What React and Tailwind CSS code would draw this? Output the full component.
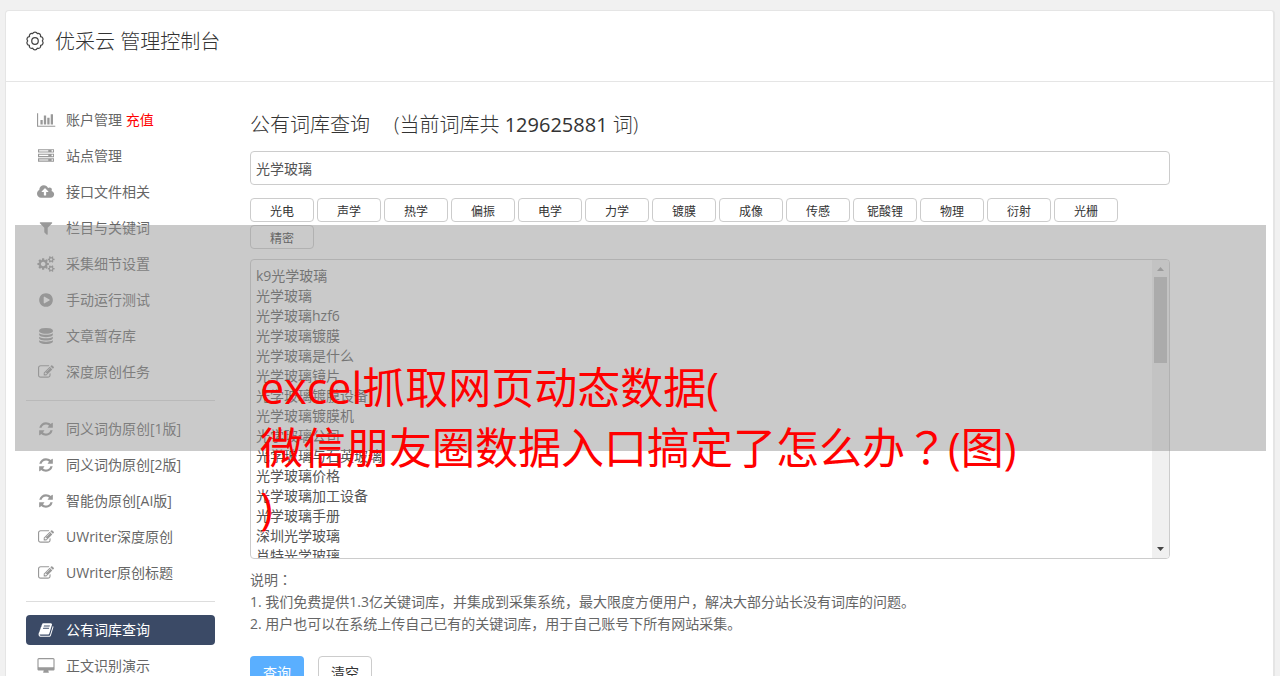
import React from "react";

const ICONS = {
  chart: [2048, "M640 896v512h-256v-512h256zm384-512v1024h-256v-1024h256zm1024 1152v128h-2048v-1536h128v1408h1920zm-640-896v768h-256v-768h256zm384-384v1152h-256v-1152h256z"],
  server: [1792, "M128 1408h1024v-128h-1024v128zm0-512h1024v-128h-1024v128zm1568 448q0-40-28-68t-68-28-68 28-28 68 28 68 68 28 68-28 28-68zm-1568-960h1024v-128h-1024v128zm1568 448q0-40-28-68t-68-28-68 28-28 68 28 68 68 28 68-28 28-68zm0-512q0-40-28-68t-68-28-68 28-28 68 28 68 68 28 68-28 28-68zm96 832v384h-1792v-384h1792zm0-512v384h-1792v-384h1792zm0-512v384h-1792v-384h1792z"],
  cloud: [1920, "M1280 864q0-14-9-23l-352-352q-9-9-23-9t-23 9l-351 351q-10 12-10 24 0 14 9 23t23 9h224v352q0 13 9.5 22.5t22.5 9.5h192q13 0 22.5-9.5t9.5-22.5v-352h224q13 0 22.5-9.5t9.5-22.5zm640 288q0 159-112.5 271.5t-271.5 112.5h-1088q-185 0-316.5-131.5t-131.5-316.5q0-130 70-240t188-165q-2-30-2-43 0-212 150-362t362-150q156 0 285.5 87t188.5 231q71-62 166-62 106 0 181 75t75 181q0 76-41 138 130 31 213.5 135.5t83.5 238.5z"],
  filter: [1792, "M1595 295q17 41-14 70l-493 493v742q0 42-39 59-13 5-25 5-27 0-45-19l-256-256q-19-19-19-45v-486l-493-493q-31-29-14-70 17-39 59-39h1280q42 0 59 39z"],
  cogs: [1856, "M832 896q0-106-75-181t-181-75-181 75-75 181 75 181 181 75 181-75 75-181zm768 512q0-52-38-90t-90-38-90 38-38 90q0 53 37.5 90.5t90.5 37.5 90.5-37.5 37.5-90.5zm0-1024q0-52-38-90t-90-38-90 38-38 90q0 53 37.5 90.5t90.5 37.5 90.5-37.5 37.5-90.5zm-384 421v185q0 10-7 19.5t-16 10.5l-155 24q-11 35-32 76 34 48 90 115 7 11 7 20 0 12-7 19-23 30-82.5 89.5t-78.5 59.5q-11 0-21-7l-115-90q-37 19-77 31-11 108-23 155-7 24-30 24h-186q-11 0-20-7.5t-10-17.5l-23-153q-34-10-75-31l-118 89q-7 7-20 7-11 0-21-8-144-133-144-160 0-9 7-19 10-14 41-53t47-61q-23-44-35-82l-152-24q-10-1-17-9.5t-7-19.5v-185q0-10 7-19.5t16-10.5l155-24q11-35 32-76-34-48-90-115-7-11-7-20 0-12 7-20 22-30 82-89t79-59q11 0 21 7l115 90q34-18 77-32 11-108 23-154 7-24 30-24h186q11 0 20 7.5t10 17.5l23 153q34 10 75 31l118-89q8-7 20-7 11 0 21 8 144 133 144 160 0 8-7 19-12 16-42 54t-45 60q23 48 34 82l152 23q10 2 17 10.5t7 19.5zm640 533v140q0 16-149 31-12 27-30 52 51 113 51 138 0 4-4 7-122 71-124 71-8 0-46-47t-52-68q-20 2-30 2t-30-2q-14 21-52 68t-46 47q-2 0-124-71-4-3-4-7 0-25 51-138-18-25-30-52-149-15-149-31v-140q0-16 149-31 13-29 30-52-51-113-51-138 0-4 4-7 4-2 35-20t59-34 30-16q8 0 46 46.5t52 67.5q20-2 30-2t30 2q51-71 92-112l6-2q4 0 124 70 4 3 4 7 0 25-51 138 17 23 30 52 149 15 149 31zm0-1024v140q0 16-149 31-12 27-30 52 51 113 51 138 0 4-4 7-122 71-124 71-8 0-46-47t-52-68q-20 2-30 2t-30-2q-14 21-52 68t-46 47q-2 0-124-71-4-3-4-7 0-25 51-138-18-25-30-52-149-15-149-31v-140q0-16 149-31 13-29 30-52-51-113-51-138 0-4 4-7 4-2 35-20t59-34 30-16q8 0 46 46.5t52 67.5q20-2 30-2t30 2q51-71 92-112l6-2q4 0 124 70 4 3 4 7 0 25-51 138 17 23 30 52 149 15 149 31z"],
  play: [1792, "M896 128q209 0 385.5 103t279.5 279.5 103 385.5-103 385.5-279.5 279.5-385.5 103-385.5-103-279.5-279.5-103-385.5 103-385.5 279.5-279.5 385.5-103zm384 823q32-18 32-55t-32-55l-544-320q-31-19-64-1-32 19-32 56v640q0 37 32 56 16 8 32 8 17 0 32-9z"],
  database: [1792, "M896 768q237 0 443-43t325-127v170q0 69-103 128t-280 93.5-385 34.5-385-34.5-280-93.5-103-128v-170q119 84 325 127t443 43zm0 768q237 0 443-43t325-127v170q0 69-103 128t-280 93.5-385 34.5-385-34.5-280-93.5-103-128v-170q119 84 325 127t443 43zm0-384q237 0 443-43t325-127v170q0 69-103 128t-280 93.5-385 34.5-385-34.5-280-93.5-103-128v-170q119 84 325 127t443 43zm0-1152q208 0 385 34.5t280 93.5 103 128v128q0 69-103 128t-280 93.5-385 34.5-385-34.5-280-93.5-103-128v-128q0-69 103-128t280-93.5 385-34.5z"],
  edit: [1792, "M888 1184l116-116-152-152-116 116v56h96v96h56zm440-720q-16-16-33 1l-350 350q-17 17-1 33t33-1l350-350q17-17 1-33zm80 594v190q0 119-84.5 203.5t-203.5 84.5h-832q-119 0-203.5-84.5t-84.5-203.5v-832q0-119 84.5-203.5t203.5-84.5h832q63 0 117 25 15 7 18 23 3 17-9 29l-49 49q-14 14-32 8-23-6-45-6h-832q-66 0-113 47t-47 113v832q0 66 47 113t113 47h832q66 0 113-47t47-113v-126q0-13 9-22l64-64q15-15 35-7t20 29zm-96-738l288 288-672 672h-288v-288zm444 132l-92 92-288-288 92-92q28-28 68-28t68 28l152 152q28 28 28 68t-28 68z"],
  refresh: [1792, "M1639 1056q0 5-1 7-64 268-268 434.5t-478 166.5q-146 0-282.5-55t-243.5-157l-129 129q-19 19-45 19t-45-19-19-45v-448q0-26 19-45t45-19h448q26 0 45 19t19 45-19 45l-137 137q71 66 161 102t187 36q134 0 250-65t186-179q11-17 53-117 8-23 30-23h192q13 0 22.5 9.5t9.5 22.5zm25-800v448q0 26-19 45t-45 19h-448q-26 0-45-19t-19-45 19-45l138-138q-148-137-349-137-134 0-250 65t-186 179q-11 17-53 117-8 23-30 23h-199q-13 0-22.5-9.5t-9.5-22.5v-7q65-268 270-434.5t480-166.5q146 0 284 55.5t245 156.5l130-129q19-19 45-19t45 19 19 45z"],
  book: [1792, "M1703 478q40 57 18 129l-275 906q-19 64-76.5 107.5t-122.5 43.5h-923q-77 0-148.5-53.5t-99.5-131.5q-24-67-2-127 0-4 3-27t4-37q1-8-3-21.5t-3-19.5q2-11 8-21t16.5-23.5 16.5-23.5q23-38 45-91.5t30-91.5q3-10 .5-30t-.5-28q3-11 17-28t17-23q21-36 42-92t25-90q1-9-2.5-32t.5-28q4-13 22-30.5t22-22.5q19-26 42.5-84.5t27.5-96.5q1-8-3-25.5t-2-26.5q2-8 9-18t18-23 17-21q8-12 16.5-30.5t15-35 16-36 19.5-32 26.5-23.5 36-11.5 47.5 5.5l-1 3q38-9 51-9h761q74 0 114 56t18 130l-274 906q-36 119-71.5 153.5t-128.5 34.5h-869q-27 0-38 15-11 16-1 43 24 70 144 70h923q29 0 56-15.5t35-41.5l300-987q7-22 5-57 38 15 59 43zm-1064 2q-4 13 2 22.5t20 9.5h608q13 0 25.5-9.5t16.5-22.5l21-64q4-13-2-22.5t-20-9.5h-608q-13 0-25.5 9.5t-16.5 22.5zm-83 256q-4 13 2 22.5t20 9.5h608q13 0 25.5-9.5t16.5-22.5l21-64q4-13-2-22.5t-20-9.5h-608q-13 0-25.5 9.5t-16.5 22.5z"],
  desktop: [1792, "M1728 992v-832q0-13-9.5-22.5t-22.5-9.5h-1600q-13 0-22.5 9.5t-9.5 22.5v832q0 13 9.5 22.5t22.5 9.5h1600q13 0 22.5-9.5t9.5-22.5zm128-832v1088q0 66-47 113t-113 47h-544q0 37 16 77.5t32 71 16 43.5q0 26-19 45t-45 19h-512q-26 0-45-19t-19-45q0-14 16-44t32-70 16-78h-544q-66 0-113-47t-47-113v-1088q0-66 47-113t113-47h1600q66 0 113 47t47 113z"],
};

function Icon({ name }) {
  const [width, path] = ICONS[name];
  return (
    <span className="flex w-5 shrink-0 justify-center">
      <svg className="h-4 w-auto shrink-0 overflow-visible" viewBox={`0 0 ${width} 1792`} fill="currentColor" aria-hidden="true">
        <path d={path} />
      </svg>
    </span>
  );
}

function GearIcon() {
  return (
    <svg className="mb-[2px] size-[18px] overflow-visible" viewBox="2 1.800 16 16" fill="none" stroke="#444" strokeWidth="1.100" strokeLinejoin="round" aria-hidden="true">
      <path d="M8 3.200Q8.500 2 10 2Q11.500 2 12 3.200Q13.300 2.700 14.300 3.600Q15.300 4.500 14.900 5.900Q16.400 6 17 7.300Q17.500 8.700 16.500 9.700Q17.600 10.800 17 12.200Q16.400 13.600 15 13.600Q15.300 15 14.300 15.900Q13.200 16.800 12 16.200Q11.500 17.600 10 17.600Q8.500 17.600 8 16.200Q6.800 16.800 5.700 15.900Q4.700 15 5 13.600Q3.600 13.600 3 12.200Q2.400 10.800 3.500 9.700Q2.500 8.700 3 7.300Q3.600 6 5.100 5.900Q4.700 4.500 5.700 3.600Q6.700 2.700 8 3.200Z" />
      <circle cx="10" cy="9.800" r="2.900" />
    </svg>
  );
}

const NAV_GROUPS = [
  [
    { icon: "chart", label: "账户管理", extra: "充值" },
    { icon: "server", label: "站点管理" },
    { icon: "cloud", label: "接口文件相关" },
    { icon: "filter", label: "栏目与关键词" },
    { icon: "cogs", label: "采集细节设置" },
    { icon: "play", label: "手动运行测试" },
    { icon: "database", label: "文章暂存库" },
    { icon: "edit", label: "深度原创任务" },
  ],
  [
    { icon: "refresh", label: "同义词伪原创[1版]" },
    { icon: "refresh", label: "同义词伪原创[2版]" },
    { icon: "refresh", label: "智能伪原创[AI版]" },
    { icon: "edit", label: "UWriter深度原创" },
    { icon: "edit", label: "UWriter原创标题" },
  ],
  [
    { icon: "book", label: "公有词库查询", active: true },
    { icon: "desktop", label: "正文识别演示" },
  ],
];

const TAGS = ["光电", "声学", "热学", "偏振", "电学", "力学", "镀膜", "成像", "传感", "铌酸锂", "物理", "衍射", "光栅", "精密"];

const WORDS = [
  "k9光学玻璃",
  "光学玻璃",
  "光学玻璃hzf6",
  "光学玻璃镀膜",
  "光学玻璃是什么",
  "光学玻璃镜片",
  "光学玻璃镀膜设备",
  "光学玻璃镀膜机",
  "光学玻璃公司",
  "光学玻璃与石英玻璃",
  "光学玻璃价格",
  "光学玻璃加工设备",
  "光学玻璃手册",
  "深圳光学玻璃",
  "肖特光学玻璃",
].join("\n");

function NavItem({ icon, label, extra, active }) {
  return (
    <a
      href="#"
      className={
        active
          ? "flex h-[30px] items-center gap-[10px] rounded bg-[#3b4a66] px-[10px] text-white"
          : "flex h-[30px] items-center gap-[10px] rounded px-[10px] text-[#999]"
      }
    >
      <Icon name={icon} />
      <span className={active ? "text-white" : "text-[#666]"}>
        {label}
        {extra && <span className="text-[#f00]"> {extra}</span>}
      </span>
    </a>
  );
}

function Sidebar() {
  return (
    <nav className="w-[189px] shrink-0 text-sm">
      {NAV_GROUPS.map((group, i) => (
        <div key={i} className={i ? "mt-[13px] border-t border-[#ddd] pt-[13px]" : ""}>
          <div className="flex flex-col gap-[6px]">
            {group.map((item) => (
              <NavItem key={item.label} {...item} />
            ))}
          </div>
        </div>
      ))}
    </nav>
  );
}

function ScrollTrack() {
  return (
    <div className="flex w-[17px] shrink-0 flex-col items-center bg-[#f0f0f0]" aria-hidden="true">
      <svg className="h-[17px] w-[17px]" viewBox="0 0 17 17" fill="#a0a0a0">
        <path d="M5 11h7l-3.500-4z" />
      </svg>
      <div className="h-[86px] w-[13px] bg-[#c1c1c1]" />
      <svg className="mt-auto h-[17px] w-[17px]" viewBox="0 0 17 17" fill="#444">
        <path d="M5 6h7l-3.500 4z" />
      </svg>
    </div>
  );
}

function CenteredMark({ children }) {
  return (
    <span className="font-['Noto_Sans_CJK_JP',sans-serif] leading-none" lang="ja">
      {children}
    </span>
  );
}

function Watermark() {
  return (
    <div className="pointer-events-none absolute top-[225px] right-[14px] left-[15px] h-[226px] bg-[#969696]/50 pt-[133px] pl-[245px]">
      <p className="text-[43px] leading-[60px] whitespace-nowrap text-[#f00]">
        excel抓取网页动态数据(
        <br />
        微信朋友圈数据入口搞定了怎么办<CenteredMark>？</CenteredMark>(图)
        <br />)
      </p>
    </div>
  );
}

export default function App() {
  return (
    <div className="relative min-h-screen overflow-hidden bg-[#f1f1f1] px-[5px] pt-[10px] font-['Open_Sans','Noto_Sans_CJK_SC',sans-serif] text-[#333]">
      <div className="min-h-screen rounded-t border border-r-2 border-b-0 border-[#e5e5e5] bg-white">
        <header className="flex h-[71px] items-center gap-[11px] border-b border-[#e5e5e5] px-5 pb-2 text-xl font-light">
          <GearIcon />
          <h1>优采云 管理控制台</h1>
        </header>
        <div className="flex gap-[35px] px-5 pt-[23px]">
          <Sidebar />
          <main className="mr-[83px] min-w-0 flex-1 pb-6 text-sm">
            <h2 className="flex h-[40px] items-center gap-6 text-xl font-light">
              <span>公有词库查询</span>
              <span>
                (当前词库共 <span className="font-normal">129625881</span> 词)
              </span>
            </h2>
            <input
              aria-label="关键词"
              defaultValue="光学玻璃"
              className="mt-[6px] block h-[34px] w-full rounded border border-[#ccc] px-[5px] text-[#555]"
            />
            <div className="mt-[13px] flex flex-wrap gap-[3px]">
              {TAGS.map((tag) => (
                <button key={tag} type="button" className="h-6 w-16 rounded border border-[#ccc] pt-[3px] text-xs">
                  {tag}
                </button>
              ))}
            </div>
            <div className="mt-[10px] flex h-[300px] overflow-hidden rounded border border-[#ccc]">
              <textarea
                aria-label="查询结果"
                defaultValue={WORDS}
                className="min-w-0 flex-1 resize-none px-[5px] py-[6px] leading-5 text-[#555] outline-none [scrollbar-width:none]"
              />
              <ScrollTrack />
            </div>
            <div className="mt-[10px] leading-[22px] text-[#666]">
              <p>
                说明<CenteredMark>：</CenteredMark>
              </p>
              <p>1. 我们免费提供1.3亿关键词库，并集成到采集系统，最大限度方便用户，解决大部分站长没有词库的问题。</p>
              <p>2. 用户也可以在系统上传自己已有的关键词库，用于自己账号下所有网站采集。</p>
            </div>
            <div className="mt-[21px] flex gap-[14px]">
              <button type="button" className="h-[34px] w-[54px] rounded bg-[#5aafff] text-white">
                查询
              </button>
              <button type="button" className="h-[34px] w-[54px] rounded border border-[#ccc]">
                清空
              </button>
            </div>
          </main>
        </div>
      </div>
      <Watermark />
    </div>
  );
}
